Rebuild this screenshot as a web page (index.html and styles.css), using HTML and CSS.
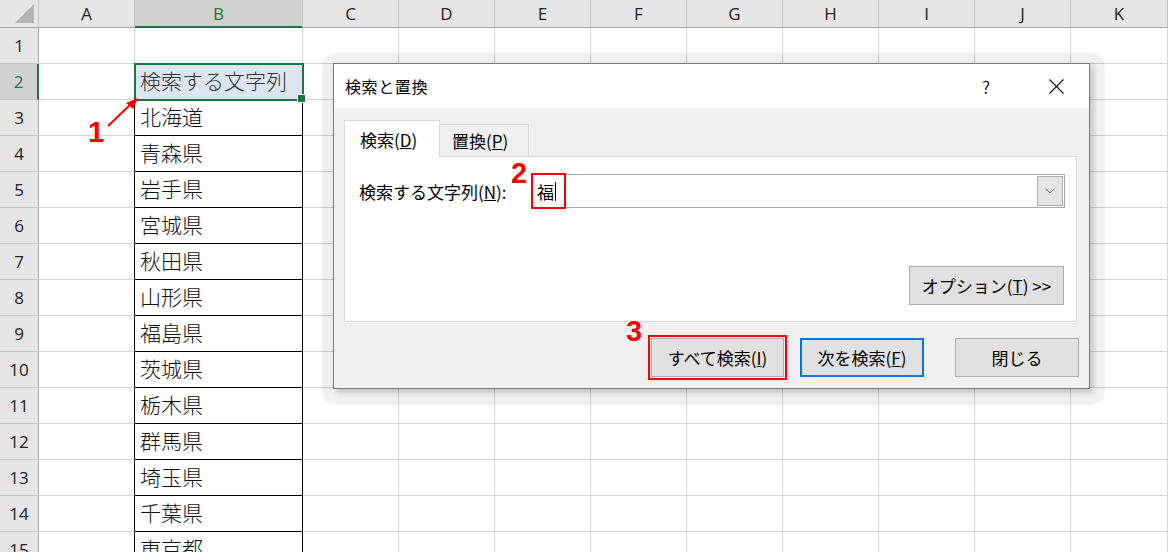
FILE: index.html
```html
<!DOCTYPE html>
<html lang="ja">

<head>
     <meta charset="UTF-8">
     <title>検索と置換</title>
     <link rel="stylesheet" href="styles.css">
</head>

<body>

     <div class="sheet">
          <div class="h corner"></div><div class="h">A</div><div class="h on">B</div><div class="h">C</div><div class="h">D</div><div class="h">E</div><div class="h">F</div><div class="h">G</div><div class="h">H</div><div class="h">I</div><div class="h">J</div><div class="h">K</div>

          <div class="rh">1</div><div class="c"></div><div class="c"></div><div class="c"></div><div class="c"></div><div class="c"></div><div class="c"></div><div class="c"></div><div class="c"></div><div class="c"></div><div class="c"></div><div class="c"></div>
          <div class="rh on">2</div><div class="c"></div><div class="c b sel">検索する文字列</div><div class="c"></div><div class="c"></div><div class="c"></div><div class="c"></div><div class="c"></div><div class="c"></div><div class="c"></div><div class="c"></div><div class="c"></div>
          <div class="rh">3</div><div class="c e"></div><div class="c b t">北海道</div><div class="c"></div><div class="c"></div><div class="c"></div><div class="c"></div><div class="c"></div><div class="c"></div><div class="c"></div><div class="c"></div><div class="c"></div>
          <div class="rh">4</div><div class="c e"></div><div class="c b t">青森県</div><div class="c"></div><div class="c"></div><div class="c"></div><div class="c"></div><div class="c"></div><div class="c"></div><div class="c"></div><div class="c"></div><div class="c"></div>
          <div class="rh">5</div><div class="c e"></div><div class="c b t">岩手県</div><div class="c"></div><div class="c"></div><div class="c"></div><div class="c"></div><div class="c"></div><div class="c"></div><div class="c"></div><div class="c"></div><div class="c"></div>
          <div class="rh">6</div><div class="c e"></div><div class="c b t">宮城県</div><div class="c"></div><div class="c"></div><div class="c"></div><div class="c"></div><div class="c"></div><div class="c"></div><div class="c"></div><div class="c"></div><div class="c"></div>
          <div class="rh">7</div><div class="c e"></div><div class="c b t">秋田県</div><div class="c"></div><div class="c"></div><div class="c"></div><div class="c"></div><div class="c"></div><div class="c"></div><div class="c"></div><div class="c"></div><div class="c"></div>
          <div class="rh">8</div><div class="c e"></div><div class="c b t">山形県</div><div class="c"></div><div class="c"></div><div class="c"></div><div class="c"></div><div class="c"></div><div class="c"></div><div class="c"></div><div class="c"></div><div class="c"></div>
          <div class="rh">9</div><div class="c e"></div><div class="c b t">福島県</div><div class="c"></div><div class="c"></div><div class="c"></div><div class="c"></div><div class="c"></div><div class="c"></div><div class="c"></div><div class="c"></div><div class="c"></div>
          <div class="rh">10</div><div class="c e"></div><div class="c b t">茨城県</div><div class="c"></div><div class="c"></div><div class="c"></div><div class="c"></div><div class="c"></div><div class="c"></div><div class="c"></div><div class="c"></div><div class="c"></div>
          <div class="rh">11</div><div class="c e"></div><div class="c b t">栃木県</div><div class="c"></div><div class="c"></div><div class="c"></div><div class="c"></div><div class="c"></div><div class="c"></div><div class="c"></div><div class="c"></div><div class="c"></div>
          <div class="rh">12</div><div class="c e"></div><div class="c b t">群馬県</div><div class="c"></div><div class="c"></div><div class="c"></div><div class="c"></div><div class="c"></div><div class="c"></div><div class="c"></div><div class="c"></div><div class="c"></div>
          <div class="rh">13</div><div class="c e"></div><div class="c b t">埼玉県</div><div class="c"></div><div class="c"></div><div class="c"></div><div class="c"></div><div class="c"></div><div class="c"></div><div class="c"></div><div class="c"></div><div class="c"></div>
          <div class="rh">14</div><div class="c e"></div><div class="c b t">千葉県</div><div class="c"></div><div class="c"></div><div class="c"></div><div class="c"></div><div class="c"></div><div class="c"></div><div class="c"></div><div class="c"></div><div class="c"></div>
          <div class="rh">15</div><div class="c e"></div><div class="c b t">東京都</div><div class="c"></div><div class="c"></div><div class="c"></div><div class="c"></div><div class="c"></div><div class="c"></div><div class="c"></div><div class="c"></div><div class="c"></div>
     </div>

     <!-- 検索と置換ダイアログ -->
     <div class="halo">
          <div class="dialog">
               <div class="titlebar">
                    <span class="title">検索と置換</span>
                    <span class="help">?</span>
                    <svg class="close" width="15" height="15" viewBox="0 0 15 15">
                         <path d="M0.5 0.5L14.5 14.5M14.5 0.5L0.5 14.5" stroke="#111" stroke-width="1.1" fill="none" />
                    </svg>
               </div>
               <div class="dialog-body">
                    <div class="tabs">
                         <div class="tab active">検索(<u>D</u>)</div>
                         <div class="tab">置換(<u>P</u>)</div>
                    </div>
                    <div class="panel">
                         <div class="find-row">
                              <label class="find-label">検索する文字列(<u>N</u>):</label>
                              <div class="combo">
                                   <span class="value">福</span><span class="caret"></span>
                                   <span class="hit"></span>
                                   <span class="drop">
                                        <svg width="10" height="6" viewBox="0 0 10 6">
                                             <path d="M0.5 0.5L5 5L9.5 0.5" fill="none" stroke="#777" stroke-width="1" />
                                        </svg>
                                   </span>
                              </div>
                         </div>
                         <button class="btn options">オプション(<u>T</u>) &gt;&gt;</button>
                    </div>
                    <div class="actions">
                         <button class="btn find-all">すべて検索(<u>I</u>)</button>
                         <button class="btn find-next">次を検索(<u>F</u>)</button>
                         <button class="btn close-btn">閉じる</button>
                    </div>
               </div>
          </div>
     </div>

     <!-- 手順の番号 -->
     <span class="num n1">1</span>
     <span class="num n2">2</span>
     <span class="num n3">3</span>
     <svg class="arrow" width="44" height="40" viewBox="0 0 44 40">
          <path d="M8 34L33 10" stroke="#f00" stroke-width="2" fill="none" />
          <path d="M38 6L26 11L33 17Z" fill="#f00" />
     </svg>

</body>

</html>
```

FILE: styles.css
```css
* {
     box-sizing: border-box;
}

body {
     margin: 0;
     width: 1168px;
     height: 552px;
     overflow: hidden;
     position: relative;
     background: #fff;
     font-family: "Noto Sans CJK JP", "Noto Sans", sans-serif;
}

/* シート */
.sheet {
     display: grid;
     grid-template-columns: 39px 96px 168px repeat(8, 96px) 97px;
     grid-template-rows: 28px repeat(15, 36px);
}

.c {
     border-right: 1px solid #d4d4d4;
     border-bottom: 1px solid #d4d4d4;
}

.h,
.rh {
     background: #e6e6e6;
     color: #222;
     display: flex;
     align-items: center;
     justify-content: center;
     font-family: "Open Sans", "Noto Sans", sans-serif;
     font-size: 17px;
}

.h {
     border-right: 1px solid #c4c4c4;
     border-bottom: 1px solid #ababab;
}

.rh {
     border-right: 1px solid #ababab;
     border-bottom: 1px solid #c4c4c4;
}

.h.on,
.rh.on {
     background: #d2d2d2;
     color: #217346;
}

.h.on {
     border-bottom: 2px solid #217346;
}

.rh.on {
     border-right: 2px solid #217346;
}

.corner {
     position: relative;
}

.corner::after {
     content: "";
     position: absolute;
     right: 4px;
     bottom: 4px;
     border-style: solid;
     border-width: 0 0 19px 19px;
     border-color: transparent transparent #b4b4b4 transparent;
}

.b {
     display: flex;
     align-items: center;
     padding-left: 5px;
     padding-bottom: 3px;
     font-size: 21px;
     font-weight: 300;
     color: #111;
}

.t {
     border-right-color: #000;
     border-bottom-color: #000;
}

.e {
     border-right-color: #000;
}

.sel {
     position: relative;
     background: #dce6f1;
     color: #333;
     outline: 2px solid #217346;
     outline-offset: -1px;
     border-bottom-color: #000;
}

.sel::after {
     content: "";
     position: absolute;
     right: -4px;
     bottom: -4px;
     width: 7px;
     height: 7px;
     background: #217346;
     border: 1px solid #fff;
}

/* ダイアログ */
.halo {
     position: absolute;
     left: 322px;
     top: 53px;
     padding: 10px 15px 16px 11px;
     border-radius: 14px;
     background: rgba(0, 0, 0, 0.055);
}

.dialog {
     width: 757px;
     height: 326px;
     border: 1px solid #7a7a7a;
     background: #f0f0f0;
     box-shadow: 3px 3px 7px rgba(0, 0, 0, 0.22);
     display: flex;
     flex-direction: column;
     color: #000;
}

.titlebar {
     height: 44px;
     background: #fff;
     display: flex;
     align-items: center;
     padding-left: 11px;
     font-size: 16px;
}

.title {
     letter-spacing: 0.6px;
}

.help {
     margin-left: auto;
     margin-right: 59px;
     font-size: 17px;
     color: #222;
}

.close {
     margin-right: 25px;
}

.dialog-body {
     padding: 12px 12px 0 10px;
     font-size: 17px;
}

.tabs {
     display: flex;
     align-items: flex-end;
     height: 36px;
}

.tab {
     height: 32px;
     width: 89px;
     padding-left: 12px;
     display: flex;
     align-items: center;
     border: 1px solid #d9d9d9;
     border-left: none;
     border-bottom: none;
     background: #f0f0f0;
}

.tab.active {
     height: 37px;
     width: 96px;
     padding-left: 15px;
     margin-bottom: -1px;
     background: #fff;
     border-left: 1px solid #d9d9d9;
     position: relative;
}

.panel {
     height: 166px;
     background: #fff;
     border: 1px solid #d9d9d9;
     padding: 17px 11px 16px 14px;
     display: flex;
     flex-direction: column;
}

.find-row {
     display: flex;
     align-items: center;
     height: 34px;
}

.find-label {
     width: 172px;
}

.combo {
     position: relative;
     flex: 1;
     height: 34px;
     border: 1px solid #ababab;
     display: flex;
     align-items: center;
     padding-left: 5px;
}

.caret {
     width: 1px;
     height: 19px;
     background: #000;
     margin-left: 1px;
}

.hit {
     position: absolute;
     left: -1px;
     top: -2px;
     width: 35px;
     height: 36px;
     border: 2px solid #f00;
}

.drop {
     margin-left: auto;
     margin-right: 1px;
     width: 26px;
     height: 30px;
     background: #e5e5e5;
     border: 1px solid #adadad;
     display: flex;
     align-items: center;
     justify-content: center;
}

.btn {
     font-family: "Noto Sans CJK JP", "Noto Sans", sans-serif;
     font-size: 17px;
     color: #000;
     background: #e1e1e1;
     border: 1px solid #adadad;
     padding: 0;
     height: 39px;
     width: 124px;
}

.options {
     margin-top: auto;
     align-self: flex-end;
     width: 155px;
     margin-right: 1px;
}

.actions {
     display: flex;
     justify-content: flex-end;
     padding-top: 16px;
     margin-right: -2px;
}

.find-all {
     width: 133px;
     outline: 2px solid #f00;
     outline-offset: 1px;
}

.find-next {
     margin-left: 16px;
     border: 2px solid #0078d7;
}

.close-btn {
     margin-left: 31px;
}

/* 番号と矢印 */
.num {
     position: absolute;
     color: #f00;
     font-family: "Liberation Sans", Arial, sans-serif;
     font-weight: bold;
     font-size: 29px;
     line-height: 1;
     text-shadow: 1px 1px 0 #fff, -1px -1px 0 #fff, 1px -1px 0 #fff, -1px 1px 0 #fff, 0 0 3px #fff;
}

.n1 {
     left: 88px;
     top: 118px;
}

.n2 {
     left: 511px;
     top: 159px;
}

.n3 {
     left: 626px;
     top: 317px;
}

.arrow {
     position: absolute;
     left: 100px;
     top: 92px;
}
```
